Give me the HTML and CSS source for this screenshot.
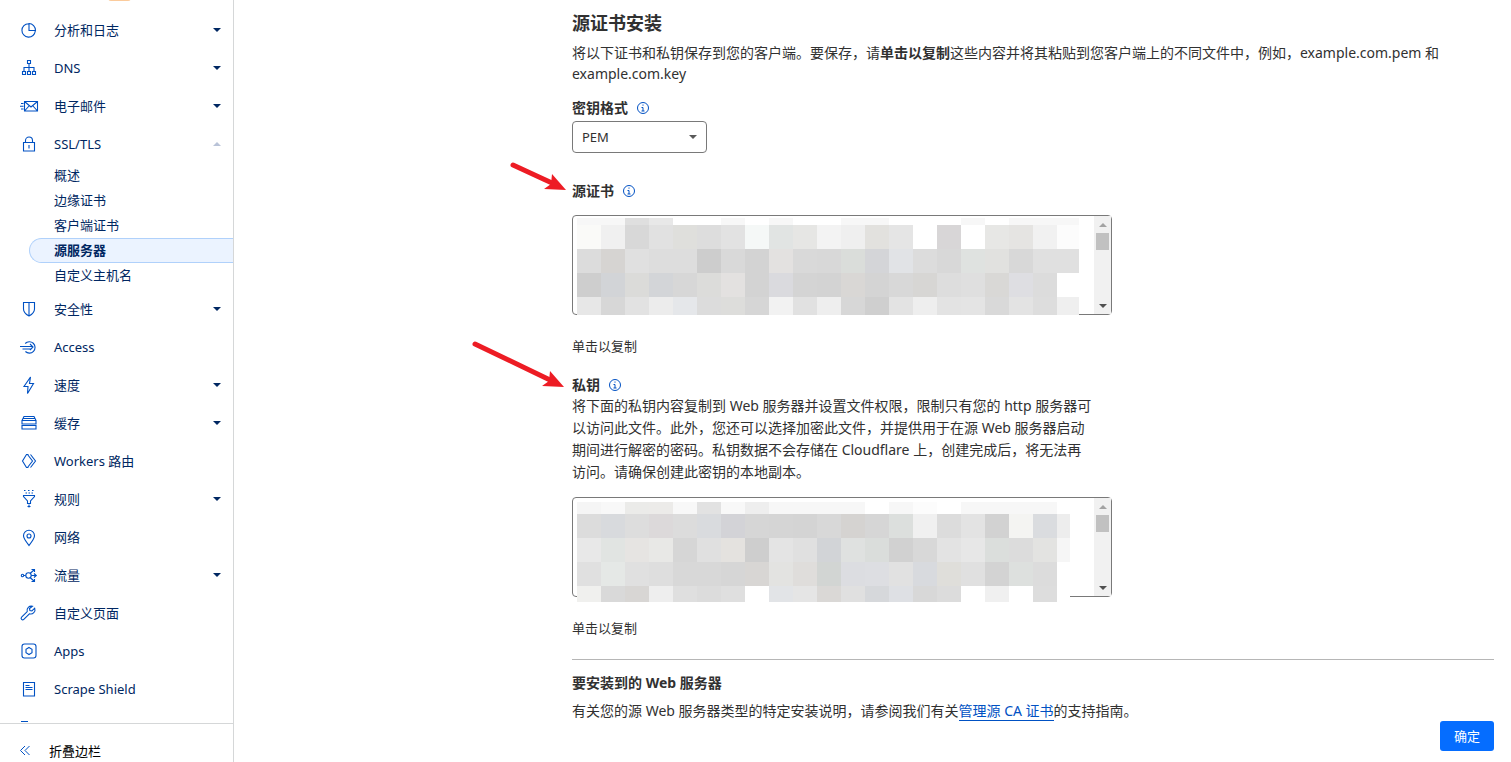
FILE: index.html
```html
<!DOCTYPE html>
<html lang="zh-CN">
<head>
	<meta charset="UTF-8">
	<title>源服务器</title>
	<link rel="stylesheet" href="styles.css">
</head>
<body>
	<aside class="sidebar">
		<nav class="nav">
			<span class="badge"></span>
			<ul class="nav-list">
				<li><a class="nav-item" href="#">
					<svg class="icon" viewBox="0 0 20 20"><path d="M9.500 3.700A6.700 6.700 0 1 0 16.300 11M10 3.500V10.500H16.500A6.500 7 0 0 0 10 3.500z"/></svg>
					<span>分析和日志</span><i class="caret"></i></a></li>
				<li><a class="nav-item" href="#">
					<svg class="icon" viewBox="0 0 20 20"><path d="M8.500 2.500h3v3h-3zM3.500 13.500h3v3h-3zM8.500 13.500h3v3h-3zM13.500 13.500h3v3h-3zM10 5.500v8M5 13.500v-4h10v4"/></svg>
					<span>DNS</span><i class="caret"></i></a></li>
				<li><a class="nav-item" href="#">
					<svg class="icon" viewBox="0 0 20 20"><path d="M5.500 5.500h13v9.500h-13zM5.500 5.500l6.500 5.500 6.500-5.500M5.500 15l4.500-5M18.500 15l-4.500-5M2 7.500h2.500M1 10.200h3.500M2 13h2.500"/></svg>
					<span>电子邮件</span><i class="caret"></i></a></li>
				<li><a class="nav-item" href="#">
					<svg class="icon" viewBox="0 0 20 20"><path d="M4.500 8.500h11v8.500h-11zM6.500 8.500V6.500a3.500 3.500 0 0 1 7 0v2M10 11v3.500"/></svg>
					<span>SSL/TLS</span><i class="caret up"></i></a>
					<ul class="sub-list">
						<li><a class="sub-item" href="#">概述</a></li>
						<li><a class="sub-item" href="#">边缘证书</a></li>
						<li><a class="sub-item" href="#">客户端证书</a></li>
						<li><a class="sub-item active" href="#">源服务器</a></li>
						<li><a class="sub-item" href="#">自定义主机名</a></li>
					</ul>
				</li>
				<li><a class="nav-item" href="#">
					<svg class="icon" viewBox="0 0 20 20"><path d="M4.500 3.500h11v6.500c0 3-2 5.200-5.500 7-3.500-1.800-5.500-4-5.500-7zM10 3.500V17"/></svg>
					<span>安全性</span><i class="caret"></i></a></li>
				<li><a class="nav-item" href="#">
					<svg class="icon" viewBox="0 0 20 20"><path d="M6.200 6.500a5.700 5.700 0 1 1 .2 8M1 9.500h12.500M3.500 12h8M11 7l3 3-3 3"/></svg>
					<span>Access</span></a></li>
				<li><a class="nav-item" href="#">
					<svg class="icon" viewBox="0 0 20 20"><path d="M11.500 2L5 11.500h4L8.500 18.500l6-10h-4z"/></svg>
					<span>速度</span><i class="caret"></i></a></li>
				<li><a class="nav-item" href="#">
					<svg class="icon" viewBox="0 0 20 20"><path d="M3 7.500h14v3.500H3zM3 12.500h14v3.500H3zM3 7.500l2-4h10l2 4M4 5.500h12"/></svg>
					<span>缓存</span><i class="caret"></i></a></li>
				<li><a class="nav-item" href="#">
					<svg class="icon" viewBox="0 0 20 20"><path d="M9.500 3.500h-2L3.500 10l4 6.500h2M11.500 3.500l5 6.500-5 6.500M8.500 3.500l5 6.500-5 6.500"/></svg>
					<span>Workers 路由</span></a></li>
				<li><a class="nav-item" href="#">
					<svg class="icon" viewBox="0 0 20 20"><path d="M4.500 6.500h11v1L11.500 12v2.500h-3V12l-4-4.500zM5 1.500h1.500M9 1.500h1.500M13 1.500h1.500M6.500 4H8M9.500 4H11M12.500 4H14M10 15.500v3M8.500 17.500h3"/></svg>
					<span>规则</span><i class="caret"></i></a></li>
				<li><a class="nav-item" href="#">
					<svg class="icon" viewBox="0 0 20 20"><path d="M10 18.500c-3.500-4.500-5.500-7-5.500-9.700a5.500 5.500 0 0 1 11 0c0 2.700-2 5.200-5.500 9.700z"/><circle cx="10" cy="9" r="2"/></svg>
					<span>网络</span></a></li>
				<li><a class="nav-item" href="#">
					<svg class="icon" viewBox="0 0 20 20"><circle cx="3.500" cy="10.500" r="1.200"/><circle cx="9.500" cy="10.500" r="2.700"/><path d="M4.700 10.500h2M12.200 10.500h5M15 8.500l2.300 2-2.300 2M11 8.500l4-3.500M12.500 4.500h3V7M11 12.500l4 3.500M12.500 16.500h3V14"/></svg>
					<span>流量</span><i class="caret"></i></a></li>
				<li><a class="nav-item" href="#">
					<svg class="icon" viewBox="0 0 20 20"><path d="M13.500 3.300a4.300 4.300 0 0 0-5.300 5.300L2.600 14.200a1.500 1.500 0 0 0 2.200 2.200l5.600-5.600a4.300 4.300 0 0 0 5.300-5.600l-2.800 2.800-2-.4-.4-2z"/></svg>
					<span>自定义页面</span></a></li>
				<li><a class="nav-item" href="#">
					<svg class="icon" viewBox="0 0 20 20"><rect x="3" y="3" width="14" height="14" rx="2.500"/><path d="M10 6.500l3 1.700v3.600l-3 1.700-3-1.700V8.200z"/></svg>
					<span>Apps</span></a></li>
				<li><a class="nav-item" href="#">
					<svg class="icon" viewBox="0 0 20 20"><path d="M4.500 3.500h11v13.500h-11zM6.500 6.500h4M6.500 8.500h7M6.500 10.500h7"/></svg>
					<span>Scrape Shield</span></a></li>
				<li><a class="nav-item" href="#">
					<svg class="icon" viewBox="0 0 20 20"><path d="M2 4.500h7M6 8.500h10M2 12.500h7"/></svg>
					<span>Zaraz</span></a></li>
			</ul>
		</nav>
		<button class="collapse" type="button">
			<svg class="collapse-icon" viewBox="0 0 12 12"><path d="M6 1L1.500 5.500 6 10M10.500 1L6 5.500l4.500 4.500"/></svg>
			<span>折叠边栏</span>
		</button>
	</aside>

	<main class="main">
		<h1 class="title">源证书安装</h1>
		<p class="intro">将以下证书和私钥保存到您的客户端。要保存，请<strong>单击以复制</strong>这些内容并将其粘贴到您客户端上的不同文件中，例如，example.com.pem 和 example.com.key</p>

		<div class="field">
			<div class="label-row">
				<label for="format">密钥格式</label>
				<svg class="info" viewBox="0 0 12 12"><circle cx="6" cy="6" r="5.500"/><path d="M6 2.500v1.200M4.500 5.500H6V9M4.500 9h3"/></svg>
			</div>
			<div class="select-box">
				<select id="format">
					<option>PEM</option>
				</select>
				<i class="caret"></i>
			</div>
		</div>

		<div class="field cert">
			<div class="label-row">
				<label for="cert">源证书</label>
				<svg class="info" viewBox="0 0 12 12"><circle cx="6" cy="6" r="5.500"/><path d="M6 2.500v1.200M4.500 5.500H6V9M4.500 9h3"/></svg>
			</div>
			<div class="code-box">
				<textarea id="cert" readonly></textarea>
				<div class="scrollbar"><i class="arrow-up"></i><i class="thumb"></i><i class="arrow-down"></i></div>
				<svg class="mosaic" id="mosaic-cert"></svg>
			</div>
			<button class="copy" type="button">单击以复制</button>
		</div>

		<div class="field key">
			<div class="label-row">
				<label for="key">私钥</label>
				<svg class="info" viewBox="0 0 12 12"><circle cx="6" cy="6" r="5.500"/><path d="M6 2.500v1.200M4.500 5.500H6V9M4.500 9h3"/></svg>
			</div>
			<p class="desc">将下面的私钥内容复制到 Web 服务器并设置文件权限，限制只有您的 http 服务器可以访问此文件。此外，您还可以选择加密此文件，并提供用于在源 Web 服务器启动期间进行解密的密码。私钥数据不会存储在 Cloudflare 上，创建完成后，将无法再访问。请确保创建此密钥的本地副本。</p>
			<div class="code-box">
				<textarea id="key" readonly></textarea>
				<div class="scrollbar"><i class="arrow-up"></i><i class="thumb"></i><i class="arrow-down"></i></div>
				<svg class="mosaic" id="mosaic-key"></svg>
			</div>
			<button class="copy" type="button">单击以复制</button>
		</div>

		<section class="server">
			<h2>要安装到的 Web 服务器</h2>
			<p>有关您的源 Web 服务器类型的特定安装说明，请参阅我们有关<a href="#">管理源 CA 证书</a>的支持指南。</p>
		</section>
		<div class="actions">
			<button class="submit" type="button">确定</button>
		</div>

		<!-- 红色标注箭头 -->
		<svg class="marks" viewBox="0 0 100 240">
			<path class="line" d="M43 5L82 23M5 184L80 220"/>
			<path class="head" d="M82 14L96 30 74 29 81 24zM80 211L94 227 72 226 79 221z"/>
		</svg>
	</main>

	<script src="mosaic.js"></script>
</body>
</html>
```

FILE: styles.css
```css
* {
	box-sizing: border-box;
}
body {
	display: flex;
	margin: 0;
	background-color: #fff;
	color: #313131;
	font: 14px/21px "Noto Sans", "Noto Sans CJK SC", sans-serif;
}
ul {
	margin: 0;
	padding: 0;
	list-style-type: none;
}
h1, h2, p {
	margin: 0;
}
button, select, textarea {
	font-family: inherit;
}

/*侧边栏*/
.sidebar {
	position: sticky;
	top: 0;
	flex: none;
	display: flex;
	flex-direction: column;
	width: 234px;
	height: 100vh;
	border-right: 1px solid #d5d7d8;
	overflow: hidden;
	font-size: 13px;
}
.nav {
	flex: 1;
	min-height: 0;
	overflow: hidden;
}
.badge {
	display: block;
	width: 23px;
	height: 11px;
	margin: -10px 0 10px 108px;
	border-radius: 3px;
	background-color: #fbcb9c;
}
.nav-item {
	display: flex;
	align-items: center;
	height: 38px;
	padding: 0 12px 0 19px;
	color: #002762;
	line-height: 20px;
	text-decoration: none;
}
.nav-item span {
	flex: 1;
	margin-left: 15px;
}
.icon {
	width: 20px;
	height: 20px;
	fill: none;
	stroke: #0051c3;
	stroke-width: 1.1;
}
.caret {
	width: 0;
	height: 0;
	border: 4px solid transparent;
	border-top-color: #002762;
	border-bottom: 0;
}
.caret.up {
	border-top: 0;
	border-bottom: 4px solid #b9c3d8;
}

/*二级菜单*/
.sub-list {
	padding-bottom: 2px;
}
.sub-item {
	display: block;
	height: 25px;
	margin-left: 29px;
	padding-left: 25px;
	line-height: 25px;
	color: #002762;
	text-decoration: none;
}
.sub-item.active {
	padding-left: 24px;
	border: 1px solid #b0d1fb;
	border-right: 0;
	border-radius: 13px 0 0 13px;
	background-color: #ebf3ff;
	line-height: 23px;
	font-weight: bold;
}

.collapse {
	display: flex;
	align-items: center;
	height: 39px;
	padding: 15px 0 0 19px;
	border: 0;
	border-top: 1px solid #d5d7d8;
	background: none;
	color: #000;
	font-size: 13px;
}
.collapse-icon {
	width: 12px;
	height: 12px;
	margin-right: 18px;
	fill: none;
	stroke: #0051c3;
}

/*主要内容*/
.main {
	position: relative;
	flex: 1;
	min-width: 0;
	padding: 10px 17px 10px 338px;
}
.title {
	font-size: 18px;
	line-height: 26px;
}
.intro {
	margin-top: 6px;
}
.field {
	margin-top: 13px;
	max-width: 540px;
}
.label-row {
	display: flex;
	align-items: center;
	font-weight: bold;
}
.info {
	width: 12px;
	height: 12px;
	margin-left: 9px;
	fill: none;
	stroke: #0051c3;
}
.select-box {
	position: relative;
	width: 135px;
	margin-top: 3px;
}
.select-box select {
	display: block;
	width: 100%;
	height: 32px;
	padding: 0 9px;
	appearance: none;
	border: 1px solid #797979;
	border-radius: 4px;
	background-color: #fff;
	color: #313131;
	font-size: 13px;
}
.select-box .caret {
	position: absolute;
	top: 14px;
	right: 10px;
	border-top-color: #595959;
}
.cert {
	margin-top: 27px;
}
.key {
	margin-top: 18px;
}

.code-box {
	position: relative;
	height: 100px;
	margin-top: 14px;
}
.code-box textarea {
	display: block;
	width: 100%;
	height: 100%;
	border: 1px solid #797979;
	border-radius: 4px;
	background-color: #fff;
	resize: none;
	overflow: hidden;
}
.scrollbar {
	position: absolute;
	top: 1px;
	right: 1px;
	bottom: 1px;
	display: flex;
	flex-direction: column;
	align-items: center;
	width: 17px;
	padding: 7px 0 6px;
	background-color: #f1f1f1;
}
.thumb {
	width: 13px;
	height: 17px;
	margin: 6px 0 auto;
	background-color: #c1c1c1;
}
.arrow-up {
	border: 4px solid transparent;
	border-top: 0;
	border-bottom-color: #a3a3a3;
}
.arrow-down {
	border: 4px solid transparent;
	border-bottom: 0;
	border-top-color: #505050;
}
.mosaic {
	position: absolute;
	top: 0;
	left: 0;
	width: 100%;
	height: 100%;
	overflow: visible;
	pointer-events: none;
	shape-rendering: crispEdges;
}
.copy {
	display: block;
	margin-top: 21px;
	padding: 0;
	border: 0;
	background: none;
	color: #313131;
	font-size: 13px;
	line-height: 20px;
}
.desc {
	padding-right: 17px;
	line-height: 22px;
}

.server {
	margin-top: 21px;
	padding-top: 12px;
	border-top: 1px solid #b6b6b6;
}
.server h2 {
	font-size: 14px;
	line-height: 21px;
}
.server p {
	margin-top: 7px;
}
.server a {
	border-bottom: 1px solid #0051c3;
	color: #0051c3;
	text-decoration: none;
}
.actions {
	display: flex;
	justify-content: flex-end;
}
.submit {
	width: 54px;
	height: 30px;
	padding: 0 0 2px;
	border: 0;
	border-radius: 3px;
	background-color: #056dff;
	color: #fff;
	font-size: 13px;
}

/*标注箭头浮在内容之上*/
.marks {
	position: absolute;
	top: 160px;
	left: 236px;
	width: 100px;
	height: 240px;
	pointer-events: none;
}
.marks .line {
	fill: none;
	stroke: #ed1c24;
	stroke-width: 5;
	stroke-linecap: round;
}
.marks .head {
	fill: #ed1c24;
}
```

FILE: mosaic.js
```js
// 打码色块，每格24px
function drawMosaic(id, tops, right, rows) {
	var svg = document.getElementById(id);
	rows.forEach(function(row, r) {
		row.split(' ').forEach(function(c, i) {
			var x = 5 + i * 24;
			var rect = document.createElementNS('http://www.w3.org/2000/svg', 'rect');
			rect.setAttribute('x', x);
			rect.setAttribute('y', tops[r]);
			rect.setAttribute('width', Math.min(24, right - x));
			rect.setAttribute('height', tops[r + 1] - tops[r]);
			// 两位的是灰度
			rect.setAttribute('fill', '#' + (c.length == 2 ? c + c + c : c));
			svg.appendChild(rect);
		});
	});
}

drawMosaic('mosaic-cert', [3, 10, 34, 58, 82, 100], 507, [
	'f7 f7 df e8 ff ff f7 ff f7 ff ff f7 f7 ff ff ff f7 ff f7 f7 f7',
	'fafaf8 f0 d8 e1 dfdfdc dd e2 f5f8f7 e1e4e3 e6e6e4 f3 ef e2e1de e5 ff d8d6d7 ff e7e7e5 e5e4e2 f1 fc',
	'dc d6d4d2 e0 dd dd cd d9 d3 e3e1e0 d9 d8 daddda d4d5d8 e1e3e6 dc d8 dfe2e0 e1e1df d8 e0 e0',
	'ce d2d4d7 dbdbd9 d3d5d8 d7 dcdcda e3e1e0 d3 dadade d4 d3 d9d7d5 d4 d8 d7d6d4 dd df d9d8d6 dedee2 dc ff',
	'e7 d7 e2 ec e5e7ea dc dddddb d6 f2 e1 ee d7 cf e3 ee e3 e4 d9 e3 dd ef'
]);
drawMosaic('mosaic-key', [5, 17, 41, 65, 89, 105], 498, [
	'f5 f8 ebebe9 ecebe9 f8 e2 f8 ee f7 f7 f7 f7 ff f7 fc ff f7 f7 f7 f7 ff',
	'dc d8dadd dd dcd9da dc d9dbde d3d3d7 d6 d5 d4 d8 d5d3d1 d6 dcdfdd f0 dc e3 d2 f4f4f2 dadcdf ed',
	'e8 e1e4e2 e6e4e2 e8e8e6 d6 e0 e4e2df ce e4 e0 d2d4d7 dfe1e0 dadddb d1 d8 e3 e7 dbdedc dc e3e3e1 f6',
	'e0 e5e8e6 e0 de d8 d8 d6 d8d6d4 e3e3e1 dfdddb d2d5d3 dcdde1 dddee2 e1 d8dade dfdeda e0 d3 dde0de dc ff',
	'f0f0ee d9 d8d6d4 ee df dc df ff e2e4e7 e5 dad8d6 e0 d6d8db dee0e4 d8 dc ff f0 ff dd ff'
]);
```
